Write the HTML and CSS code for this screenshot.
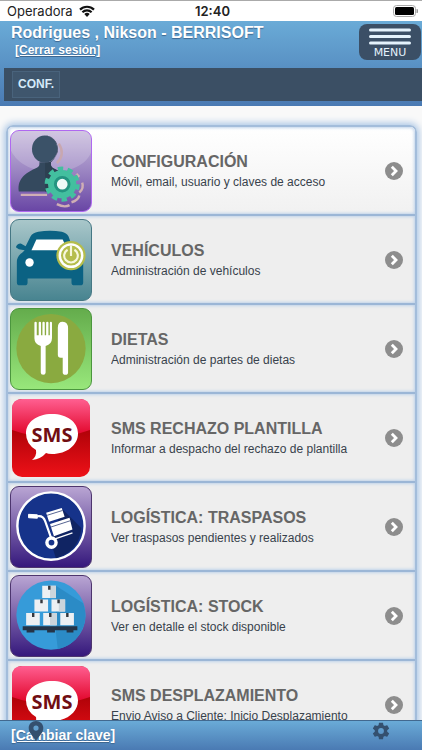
FILE: index.html
```html
<!DOCTYPE html>
<html lang="es">
<head>
    <meta charset="UTF-8">
    <meta name="viewport" content="width=device-width, initial-scale=1.0">
    <title>Configuración</title>
    <link rel="stylesheet" href="styles.css">
</head>
<body>
    <div class="status-bar">
        <div class="carrier">
            <span>Operadora</span>
            <svg class="wifi" viewBox="0 0 16 12" aria-hidden="true">
                <path d="M1 4.6A10 10 0 0 1 15 4.6M3.4 7.2a6.6 6.6 0 0 1 9.2 0" fill="none" stroke="#111" stroke-width="2.2"/>
                <path d="M5.3 9.1a4 4 0 0 1 5.4 0L8 12z" fill="#111"/>
            </svg>
        </div>
        <div class="clock">12:40</div>
        <svg class="battery" viewBox="0 0 25 12" aria-hidden="true">
            <rect x="0.5" y="0.5" width="22" height="11" rx="3" fill="#fff" stroke="#aaa"/>
            <rect x="2" y="2" width="19" height="8" rx="1.5" fill="#000"/>
            <path d="M23.5 4a2 2 0 0 1 0 4z" fill="#999"/>
        </svg>
    </div>

    <header class="header">
        <div class="user-row">
            <div class="user">
                <h1>Rodrigues , Nikson - BERRISOFT</h1>
                <a class="logout" href="#">[Cerrar sesión]</a>
            </div>
            <button class="menu-button" type="button">
                <svg viewBox="0 0 42 17" aria-hidden="true">
                    <path d="M1.5 2h39M1.5 8.5h39M1.5 15h39" stroke="#e4f2fc" stroke-width="3" stroke-linecap="round"/>
                </svg>
                <span>MENU</span>
            </button>
        </div>
        <nav class="tabs">
            <a class="tab" href="#">CONF.</a>
        </nav>
    </header>

    <main class="content">
        <ul class="options">
            <li>
                <a class="option" href="#">
                    <svg class="icon icon-user" viewBox="0 0 82 82" aria-hidden="true">
                        <path d="M0 0h82v22C72 48 14 50 0 20z" fill="#fff" opacity="0.18"/>
                        <path d="M49 13q7 11-2 20" fill="none" stroke="#c8a7b0" stroke-width="2.5"/>
                        <path d="M10 65.500h27M47 75q8 4 13 1M62 73q7-2 8-7M70 63q5-4 3-10M67 44l3 3" fill="none" stroke="#cfaeb4" stroke-width="2.500"/>
                        <path d="M8 62C6 48 17 42 26 38q4-2 3-6h12q-1 5 4 7 16 6 17 23z" fill="#34495e"/>
                        <ellipse cx="34.500" cy="18.500" rx="13" ry="14" fill="#3b5268"/>
                        <path d="M35 4.500a13 14 0 0 1 0 28V62h20V45l-10-6q-5-2-4-7 8-6 6-18-4-9-12-9.500z" fill="#2d4051"/>
                        <circle cx="52.500" cy="54.500" r="14.500" fill="#43bf9f"/>
                        <circle cx="52.500" cy="54.500" r="15.500" fill="none" stroke="#43bf9f" stroke-width="5" stroke-dasharray="5.400 4.340"/>
                        <circle cx="52.500" cy="54.500" r="7" fill="#eefaf7" stroke="#249481" stroke-width="3"/>
                    </svg>
                    <div class="text">
                        <h2>CONFIGURACIÓN</h2>
                        <p>Móvil, email, usuario y claves de acceso</p>
                    </div>
                    <svg class="arrow" viewBox="0 0 18 18" aria-hidden="true"><circle cx="9" cy="9" r="9" fill="#8d8d8d"/><path d="M6.800 4.800L11 9l-4.200 4.200" fill="none" stroke="#fff" stroke-width="2.800"/></svg>
                </a>
            </li>
            <li>
                <a class="option" href="#">
                    <svg class="icon icon-car" viewBox="0 0 82 82" aria-hidden="true">
                        <path d="M20 17Q22 13 28 12 40 10 52 12q5 1 7 5l5 14 8 6q2 2 2 6v21q0 3-3 3h-6q-3 0-3-3v-4H17v4q0 3-3 3H9q-3 0-3-3V43q0-6 6-10l2-2-6-1-3-2q1-4 5-4l5 3z" fill="#0b6283"/>
                        <path d="M26 20h27l5 11H21z" fill="#fff"/>
                        <circle cx="19" cy="43.500" r="4.300" fill="#fff"/>
                        <circle cx="61.500" cy="36.500" r="15" fill="#b5bd4c"/>
                        <circle cx="61.500" cy="36.500" r="11.500" fill="#b5bd4c" stroke="#fff" stroke-width="2.500"/>
                        <path d="M58 30.500a7 7 0 1 0 7 0M61.500 26v11" fill="none" stroke="#f7f7dc" stroke-width="2.200"/>
                    </svg>
                    <div class="text">
                        <h2>VEHÍCULOS</h2>
                        <p>Administración de vehículos</p>
                    </div>
                    <svg class="arrow" viewBox="0 0 18 18" aria-hidden="true"><circle cx="9" cy="9" r="9" fill="#8d8d8d"/><path d="M6.800 4.800L11 9l-4.200 4.200" fill="none" stroke="#fff" stroke-width="2.800"/></svg>
                </a>
            </li>
            <li>
                <a class="option" href="#">
                    <svg class="icon icon-food" viewBox="0 0 82 82" aria-hidden="true">
                        <circle cx="41" cy="40.500" r="35.500" fill="#8aaa40"/>
                        <path d="M24 14q0-1 1.200-1t1.200 1v13h2V14q0-1 1.200-1t1.200 1v13h1.400V14q0-1 1.200-1t1.200 1v13H36V14q0-1 1.200-1t1.200 1v13h1.400V14q0-1 1.100-1t1.100 1v16q0 6-6.500 8v27q0 2.500-2.500 2.500T30.500 65V38Q24 36 24 30z" fill="#fff"/>
                        <path d="M48 19q0-6 5-6 5.500 0 5.500 7v45q0 2.500-2.700 2.500T53 65V50h-2q-3 0-3-3z" fill="#fff"/>
                    </svg>
                    <div class="text">
                        <h2>DIETAS</h2>
                        <p>Administración de partes de dietas</p>
                    </div>
                    <svg class="arrow" viewBox="0 0 18 18" aria-hidden="true"><circle cx="9" cy="9" r="9" fill="#8d8d8d"/><path d="M6.800 4.800L11 9l-4.200 4.200" fill="none" stroke="#fff" stroke-width="2.800"/></svg>
                </a>
            </li>
            <li>
                <a class="option" href="#">
                    <svg class="icon icon-sms" viewBox="0 0 82 82" aria-hidden="true">
                        <defs>
                            <linearGradient id="smsTop" x1="0" y1="0" x2="0" y2="1">
                                <stop offset="0" stop-color="#ff5f91"/>
                                <stop offset="1" stop-color="#e00024"/>
                            </linearGradient>
                            <linearGradient id="smsBottom" x1="0" y1="0" x2="0" y2="1">
                                <stop offset="0.300" stop-color="#a60006"/>
                                <stop offset="1" stop-color="#ee1118"/>
                            </linearGradient>
                        </defs>
                        <rect x="2" y="2" width="78" height="78" rx="10" fill="url(#smsBottom)"/>
                        <path d="M2 12Q2 2 12 2h58q10 0 10 10v21Q41 47 2 33z" fill="url(#smsTop)"/>
                        <path d="M42 17c15 0 26 8 26 19.500S57 57 42 57q-4 0-6-1-5 6-14 7 5-4 4-10-10-6-10-16.500C16 25 27 17 42 17z" fill="#fff"/>
                        <text class="sms-label" x="42" y="45">SMS</text>
                    </svg>
                    <div class="text">
                        <h2>SMS RECHAZO PLANTILLA</h2>
                        <p>Informar a despacho del rechazo de plantilla</p>
                    </div>
                    <svg class="arrow" viewBox="0 0 18 18" aria-hidden="true"><circle cx="9" cy="9" r="9" fill="#8d8d8d"/><path d="M6.800 4.800L11 9l-4.200 4.200" fill="none" stroke="#fff" stroke-width="2.800"/></svg>
                </a>
            </li>
            <li>
                <a class="option" href="#">
                    <svg class="icon icon-purple" viewBox="0 0 82 82" aria-hidden="true">
                        <circle cx="41" cy="40" r="34.500" fill="#16338a" stroke="#fff" stroke-width="2.500"/>
                        <path d="M52 22l20 20Q70 66 46 73L41 57z" fill="#102463"/>
                        <path d="M27 30q6-1 8 5l6 17" fill="none" stroke="#fff" stroke-width="2.200"/>
                        <path d="M18 28l9 0.500v3.500l-9-0.500z" fill="#fff" stroke="#fff" stroke-linejoin="round"/>
                        <path d="M36 26.500l16-5 3 9-16 5zM40 38l20-6.500 3 12-19 7z" fill="#fff"/>
                        <path d="M37 29l16-5M41 41l20-6.500" stroke="#52618f" stroke-width="1"/>
                        <path d="M43 54l20-7" stroke="#fff" stroke-width="1.500"/>
                        <circle cx="41.500" cy="57" r="4.700" fill="#16338a" stroke="#fff" stroke-width="3.500"/>
                    </svg>
                    <div class="text">
                        <h2>LOGÍSTICA: TRASPASOS</h2>
                        <p>Ver traspasos pendientes y realizados</p>
                    </div>
                    <svg class="arrow" viewBox="0 0 18 18" aria-hidden="true"><circle cx="9" cy="9" r="9" fill="#8d8d8d"/><path d="M6.800 4.800L11 9l-4.200 4.200" fill="none" stroke="#fff" stroke-width="2.800"/></svg>
                </a>
            </li>
            <li>
                <a class="option" href="#">
                    <svg class="icon icon-purple" viewBox="0 0 82 82" aria-hidden="true">
                        <circle cx="41" cy="40" r="35.500" fill="#369bd9"/>
                        <path d="M46 10l28 18q5 14-1 27-8 16-25 20L46 58z" fill="#2b8bc6"/>
                        <path d="M32 10h14v12.500H32zM24 24h14v12.500H24zM41.500 24h14v12.500h-14zM15.500 38h14v12.500h-14zM33 38h14v12.500H33zM50.500 38h14v12.500h-14z" fill="#edf0f3"/>
                        <path d="M40 10h6v12.500h-6zM40 38h7v12.500h-7zM49 24h6.500v12.500H49z" fill="#ccd5dc"/>
                        <path d="M38 10h2.500v4H38zM30 24h2.500v4H30zM47.500 24H50v4h-2.500zM21.500 38H24v4h-2.500zM39 38h2.500v4H39zM56.500 38H59v4h-2.500z" fill="#34373d"/>
                        <path d="M12 51.500h56v4h-4V58h-7v-2.500H45V58h-8v-2.500H24V58h-8v-2.500h-4z" fill="#253447"/>
                    </svg>
                    <div class="text">
                        <h2>LOGÍSTICA: STOCK</h2>
                        <p>Ver en detalle el stock disponible</p>
                    </div>
                    <svg class="arrow" viewBox="0 0 18 18" aria-hidden="true"><circle cx="9" cy="9" r="9" fill="#8d8d8d"/><path d="M6.800 4.800L11 9l-4.200 4.200" fill="none" stroke="#fff" stroke-width="2.800"/></svg>
                </a>
            </li>
            <li>
                <a class="option" href="#">
                    <svg class="icon icon-sms" viewBox="0 0 82 82" aria-hidden="true">
                        <rect x="2" y="2" width="78" height="78" rx="10" fill="url(#smsBottom)"/>
                        <path d="M2 12Q2 2 12 2h58q10 0 10 10v21Q41 47 2 33z" fill="url(#smsTop)"/>
                        <path d="M42 17c15 0 26 8 26 19.500S57 57 42 57q-4 0-6-1-5 6-14 7 5-4 4-10-10-6-10-16.500C16 25 27 17 42 17z" fill="#fff"/>
                        <text class="sms-label" x="42" y="45">SMS</text>
                    </svg>
                    <div class="text">
                        <h2>SMS DESPLAZAMIENTO</h2>
                        <p>Envio Aviso a Cliente: Inicio Desplazamiento</p>
                    </div>
                    <svg class="arrow" viewBox="0 0 18 18" aria-hidden="true"><circle cx="9" cy="9" r="9" fill="#8d8d8d"/><path d="M6.800 4.800L11 9l-4.200 4.200" fill="none" stroke="#fff" stroke-width="2.800"/></svg>
                </a>
            </li>
        </ul>
    </main>

    <footer class="footer">
        <a class="change-password" href="#">[Cambiar clave]</a>
        <svg class="pin" viewBox="0 0 16 20" aria-hidden="true">
            <path fill-rule="evenodd" d="M8 0c4.200 0 7.300 3 7.300 7 0 5-4.300 8-7.300 13C5 15 0.700 12 0.700 7 0.700 3 3.800 0 8 0zm0 4.500a2.600 2.600 0 1 0 0 5.200 2.600 2.600 0 0 0 0-5.200z" fill="#34506f"/>
        </svg>
        <button class="settings" type="button" aria-label="Ajustes">
            <svg viewBox="0 0 24 24" aria-hidden="true">
                <path fill="#34506f" d="M19.430 12.980c.04-.32.07-.64.07-.98s-.03-.66-.07-.98l2.110-1.650c.19-.15.24-.42.12-.64l-2-3.460c-.12-.22-.39-.3-.61-.22l-2.490 1c-.52-.4-1.080-.73-1.690-.98l-.38-2.650C14.460 2.180 14.250 2 14 2h-4c-.25 0-.46.180-.49.420l-.38 2.650c-.61.250-1.170.590-1.690.980l-2.490-1c-.23-.09-.49 0-.61.220l-2 3.460c-.13.220-.07.490.12.640l2.110 1.650c-.04.320-.07.650-.07.980s.03.660.07.980l-2.110 1.650c-.19.150-.24.420-.12.640l2 3.460c.12.220.39.300.61.220l2.490-1c.52.400 1.080.730 1.690.980l.38 2.650c.03.240.24.420.49.420h4c.25 0 .46-.18.49-.42l.38-2.650c.61-.25 1.170-.59 1.690-.98l2.490 1c.23.09.49 0 .61-.22l2-3.460c.12-.22.07-.49-.12-.64zM12 15.500a3.500 3.500 0 1 1 0-7 3.500 3.500 0 0 1 0 7z"/>
            </svg>
        </button>
    </footer>
</body>
</html>
```

FILE: styles.css
```css
* {
    box-sizing: border-box;
}

body {
    margin: 0;
    height: 100vh;
    display: flex;
    flex-direction: column;
    overflow: hidden;
    background-color: #f9f9f9;
    font-family: "Liberation Sans", Arial, sans-serif;
}

h1,
h2,
p,
ul {
    margin: 0;
    padding: 0;
}

.status-bar {
    flex: none;
    display: grid;
    grid-template-columns: 1fr auto 1fr;
    align-items: center;
    height: 21px;
    padding: 0 4px 0 7px;
    border-top: 1px solid #aaa;
    background-color: #fff;
    color: #222;
    font-family: Inter, sans-serif;
    font-size: 13px;
}

.carrier {
    display: flex;
    align-items: center;
    gap: 6px;
}

.wifi {
    width: 16px;
    height: 12px;
}

.clock {
    font-weight: 600;
}

.battery {
    width: 25px;
    height: 12px;
    justify-self: end;
}

.header {
    flex: none;
    padding: 0 0 5px 4px;
    background-image: linear-gradient(to bottom, #6aabd7 0%, #4a7ab3 100%);
}

.user-row {
    display: flex;
    justify-content: space-between;
    height: 47px;
    padding: 3px 1px 0 7px;
}

.user h1 {
    color: #fff;
    font-size: 16px;
    line-height: 18px;
    text-shadow: 0 1px 1px #3e6790;
}

.logout {
    display: block;
    padding-left: 4px;
    color: #fff;
    font-size: 12px;
    font-weight: bold;
    line-height: 17px;
    text-shadow: 0 1px 1px #3e6790;
}

.menu-button {
    display: flex;
    flex-direction: column;
    align-items: center;
    gap: 2px;
    width: 62px;
    height: 36px;
    padding: 4px 0 0;
    border: none;
    border-radius: 8px;
    background-color: #3b4f66;
    color: #e4f2fc;
    font-family: "DejaVu Sans", sans-serif;
    font-size: 11px;
    line-height: 11px;
    cursor: pointer;
}

.menu-button svg {
    width: 42px;
    height: 17px;
}

.tabs {
    display: flex;
    height: 33px;
    padding: 3px 8px;
    background-color: #3b4f64;
}

.tab {
    padding: 0 5px;
    border: 1px solid #49637c;
    background-color: #3f566d;
    color: #d5eaf9;
    font-size: 12px;
    font-weight: bold;
    line-height: 25px;
    text-decoration: none;
}

.content {
    flex: 1;
    min-height: 0;
    padding: 19px 5px 0 6px;
    overflow-y: auto;
    scrollbar-width: none;
}

.options {
    list-style: none;
    border: 2px solid #a3bddb;
    border-radius: 7px;
    box-shadow: 0 0 7px 2px #a9c5e5;
}

.option {
    display: flex;
    align-items: center;
    height: 89px;
    padding: 0 12px 0 2px;
    border-bottom: 2px solid #9bb6d6;
    background-color: #eee;
    box-shadow: inset 0 0 3px 1px #bfd3ea;
    text-decoration: none;
}

li:first-child .option {
    border-radius: 5px 5px 0 0;
    background-image: linear-gradient(to bottom, #fff, #f1f1f1);
}

.icon {
    flex: none;
    width: 82px;
    height: 82px;
    border-radius: 9px;
}

.icon-user {
    border: 1px solid #af68f0;
    background-image: linear-gradient(to bottom, #c8bbdc, #9b85c2 50%, #6946a5);
}

.icon-car {
    border: 1px solid #457784;
    background-image: linear-gradient(to bottom, #a9c7ca, #488490);
}

.icon-food {
    border: 1px solid #4b963e;
    background-image: linear-gradient(to bottom, #64ac4c, #98e77b);
}

.icon-purple {
    border: 1px solid #4d356e;
    background-image: linear-gradient(to bottom, #b9a5d3, #35187c);
}

.sms-label {
    fill: #710d12;
    font-family: "Open Sans", sans-serif;
    font-size: 20px;
    font-weight: 700;
    text-anchor: middle;
}

.text {
    flex: 1;
    min-width: 0;
    padding: 3px 0 0 19px;
}

.text h2 {
    color: #666;
    font-size: 16px;
    line-height: 20px;
}

.text p {
    overflow: hidden;
    color: #38424c;
    font-size: 12px;
    line-height: 20px;
    white-space: nowrap;
}

.arrow {
    flex: none;
    width: 18px;
    height: 18px;
}

.footer {
    position: relative;
    flex: none;
    display: flex;
    justify-content: space-between;
    height: 30px;
    padding: 0 31px 0 11px;
    border-top: 1px solid #42698f;
    background-image: linear-gradient(to bottom, #6aabd7, #4a7ab3);
}

.change-password {
    color: #fff;
    font-size: 14px;
    font-weight: bold;
    line-height: 29px;
    text-shadow: 0 1px 1px #3e6790;
}

.pin {
    position: absolute;
    top: 0;
    left: 28px;
    width: 16px;
    height: 20px;
}

.settings {
    width: 20px;
    height: 20px;
    padding: 0;
    border: none;
    background: none;
    cursor: pointer;
}

.settings svg {
    display: block;
    width: 20px;
    height: 20px;
}
```
